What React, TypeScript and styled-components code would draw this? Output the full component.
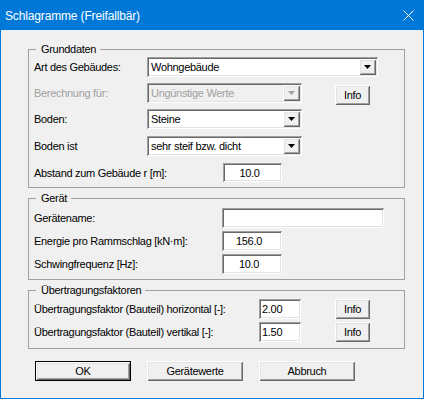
import styled, { createGlobalStyle, css } from 'styled-components'

const GlobalStyle = createGlobalStyle`
  html, body {
    margin: 0;
    padding: 0;
    background: #ffffff;
  }
  body {
    font-family: "Liberation Sans", Arial, sans-serif;
  }
`

const sunken = css`
  box-shadow: inset 1px 1px #a0a0a0, inset -1px -1px #ffffff, inset 2px 2px #696969,
    inset -2px -2px #e3e3e3;
`

const raised = css`
  box-shadow: inset 1px 1px #ffffff, inset -1px -1px #696969, inset 2px 2px #e3e3e3,
    inset -2px -2px #a0a0a0;
`

const Window = styled.div`
  width: 424px;
  height: 399px;
  box-sizing: border-box;
  border: 1px solid #0078d7;
  background: #f0f0f0;
  display: flex;
  flex-direction: column;
`

const TitleBar = styled.div`
  height: 29px;
  flex: none;
  background: #0078d7;
  color: #ffffff;
  display: flex;
  align-items: center;
  justify-content: space-between;
  padding: 0 9px 0 4px;
`

const Title = styled.span`
  font-size: 12px;
  letter-spacing: -0.15px;
`

const CloseIcon = styled.svg`
  display: block;
`

const Client = styled.div`
  display: flex;
  flex-direction: column;
  padding: 13px 18px 0 27px;
`

const Group = styled.fieldset<{ $mt?: number; $pt: number; $pb: number }>`
  margin: ${({ $mt }) => $mt ?? 0}px 0 0;
  padding: ${({ $pt }) => $pt}px 0 ${({ $pb }) => $pb}px 5px;
  border: 1px solid #a0a0a0;
  min-width: 0;
`

const GroupLabel = styled.legend`
  margin-left: 2px;
  padding: 0 4px 0 5px;
  font-size: 11px;
  line-height: 13px;
  letter-spacing: -0.3px;
  color: #000000;
`

const Rows = styled.div<{ $gap: number }>`
  display: flex;
  flex-direction: column;
  gap: ${({ $gap }) => $gap}px;
`

const Row = styled.div<{ $h?: number; $mt?: number }>`
  display: flex;
  align-items: center;
  height: ${({ $h }) => $h ?? 20}px;
  margin-top: ${({ $mt }) => $mt ?? 0}px;
`

const FieldLabel = styled.div<{ $w: number; $disabled?: boolean }>`
  width: ${({ $w }) => $w}px;
  flex: none;
  font-size: 11px;
  letter-spacing: -0.3px;
  white-space: nowrap;
  color: ${({ $disabled }) => ($disabled ? '#a0a0a0' : '#000000')};
`

const Combo = styled.div<{ $w: number; $disabled?: boolean }>`
  width: ${({ $w }) => $w}px;
  height: 100%;
  flex: none;
  box-sizing: border-box;
  padding: 2px;
  display: flex;
  background: ${({ $disabled }) => ($disabled ? '#f0f0f0' : '#ffffff')};
  ${sunken}
`

const ComboText = styled.div<{ $disabled?: boolean }>`
  flex: 1;
  display: flex;
  align-items: center;
  padding-left: 2px;
  font-size: 11px;
  letter-spacing: -0.3px;
  white-space: nowrap;
  overflow: hidden;
  color: ${({ $disabled }) => ($disabled ? '#a0a0a0' : '#000000')};
`

const ComboButton = styled.div`
  width: 17px;
  flex: none;
  background: #f0f0f0;
  display: flex;
  align-items: center;
  justify-content: center;
  ${raised}
`

const Field = styled.div<{ $w: number; $center?: boolean }>`
  width: ${({ $w }) => $w}px;
  height: 100%;
  flex: none;
  box-sizing: border-box;
  background: #ffffff;
  display: flex;
  align-items: center;
  justify-content: ${({ $center }) => ($center ? 'center' : 'flex-start')};
  padding: ${({ $center }) => ($center ? '0 6px 0 0' : '0 0 0 3px')};
  font-size: 11px;
  letter-spacing: -0.3px;
  ${sunken}
`

const PushButton = styled.button<{ $w: number; $ml?: number; $mt?: number; $default?: boolean }>`
  width: ${({ $w }) => $w}px;
  height: 20px;
  flex: none;
  align-self: ${({ $mt }) => ($mt ? 'flex-start' : 'auto')};
  margin: ${({ $mt }) => $mt ?? 0}px 0 0 ${({ $ml }) => $ml ?? 0}px;
  padding: 0;
  box-sizing: border-box;
  border: none;
  background: #f0f0f0;
  font-family: "Liberation Sans", Arial, sans-serif;
  font-size: 11px;
  letter-spacing: -0.3px;
  color: #000000;
  ${raised}
  ${({ $default }) =>
    $default &&
    css`
      border: 1px solid #000000;
    `}
`

const ButtonBar = styled.div`
  display: flex;
  gap: 16px;
  margin-top: 12px;
  padding-left: 7px;
`

function Arrow({ disabled }: { disabled?: boolean }) {
  return (
    <svg width="7" height="4" viewBox="0 0 7 4" style={{ display: 'block' }}>
      <polygon points="0,0 7,0 3.5,4" fill={disabled ? '#a0a0a0' : '#000000'} />
    </svg>
  )
}

function ComboBox({ w, value, disabled }: { w: number; value: string; disabled?: boolean }) {
  return (
    <Combo $w={w} $disabled={disabled}>
      <ComboText $disabled={disabled}>{value}</ComboText>
      <ComboButton>
        <Arrow disabled={disabled} />
      </ComboButton>
    </Combo>
  )
}

export default function App() {
  return (
    <>
      <GlobalStyle />
      <Window>
        <TitleBar>
          <Title>Schlagramme (Freifallbär)</Title>
          <CloseIcon width="11" height="11" viewBox="0 0 11 11">
            <path d="M0.5 0.5 L10.5 10.5 M10.5 0.5 L0.5 10.5" stroke="#ffffff" strokeWidth="1" />
          </CloseIcon>
        </TitleBar>
        <Client>
          <Group $pt={1} $pb={5}>
            <GroupLabel>Grunddaten</GroupLabel>
            <Rows $gap={6}>
              <Row>
                <FieldLabel $w={113}>Art des Gebäudes:</FieldLabel>
                <ComboBox w={231} value="Wohngebäude" />
              </Row>
              <Row>
                <FieldLabel $w={113} $disabled>
                  Berechnung für:
                </FieldLabel>
                <ComboBox w={155} value="Ungünstige Werte" disabled />
                <PushButton $w={35} $ml={33} $mt={2}>
                  Info
                </PushButton>
              </Row>
              <Row>
                <FieldLabel $w={113}>Boden:</FieldLabel>
                <ComboBox w={155} value="Steine" />
              </Row>
              <Row $mt={1}>
                <FieldLabel $w={113}>Boden ist</FieldLabel>
                <ComboBox w={155} value="sehr steif bzw. dicht" />
              </Row>
              <Row $mt={1} $h={19}>
                <FieldLabel $w={189}>Abstand zum Gebäude r [m]:</FieldLabel>
                <Field $w={59} $center>
                  10.0
                </Field>
              </Row>
            </Rows>
          </Group>

          <Group $mt={4} $pt={3} $pb={5}>
            <GroupLabel>Gerät</GroupLabel>
            <Rows $gap={3}>
              <Row>
                <FieldLabel $w={188}>Gerätename:</FieldLabel>
                <Field $w={162} />
              </Row>
              <Row>
                <FieldLabel $w={188}>Energie pro Rammschlag [kN·m]:</FieldLabel>
                <Field $w={60} $center>
                  156.0
                </Field>
              </Row>
              <Row>
                <FieldLabel $w={188}>Schwingfrequenz [Hz]:</FieldLabel>
                <Field $w={60} $center>
                  10.0
                </Field>
              </Row>
            </Rows>
          </Group>

          <Group $mt={4} $pt={2} $pb={6}>
            <GroupLabel>Übertragungsfaktoren</GroupLabel>
            <Rows $gap={3}>
              <Row>
                <FieldLabel $w={225}>Übertragungsfaktor (Bauteil) horizontal [-]:</FieldLabel>
                <Field $w={42}>2.00</Field>
                <PushButton $w={35} $ml={34}>
                  Info
                </PushButton>
              </Row>
              <Row>
                <FieldLabel $w={225}>Übertragungsfaktor (Bauteil) vertikal [-]:</FieldLabel>
                <Field $w={42}>1.50</Field>
                <PushButton $w={35} $ml={34}>
                  Info
                </PushButton>
              </Row>
            </Rows>
          </Group>

          <ButtonBar>
            <PushButton $w={96} $default>
              OK
            </PushButton>
            <PushButton $w={96}>Gerätewerte</PushButton>
            <PushButton $w={96}>Abbruch</PushButton>
          </ButtonBar>
        </Client>
      </Window>
    </>
  )
}
